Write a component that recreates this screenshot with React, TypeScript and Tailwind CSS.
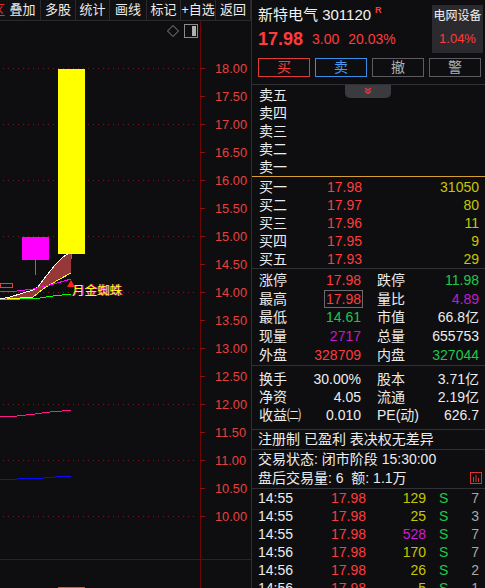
import React from 'react';

const toolbar = [
  { label: '叠加', cls: 'w-[36px]' },
  { label: '多股', cls: 'w-[35px]' },
  { label: '统计', cls: 'w-[34px]' },
  { label: '画线', cls: 'w-[37px]' },
  { label: '标记', cls: 'w-[34px]' },
  { label: '+自选', cls: 'w-[35px]' },
  { label: '返回', cls: 'flex-1' },
];

const asks = ['卖五', '卖四', '卖三', '卖二', '卖一'];

const bids = [
  ['买一', '17.98', '31050'],
  ['买二', '17.97', '80'],
  ['买三', '17.96', '11'],
  ['买四', '17.95', '9'],
  ['买五', '17.93', '29'],
];

const RED = 'text-[#ff3b3b]';
const GREEN = 'text-[#1ec84a]';
const PURPLE = 'text-[#c21cc8]';
const WHITE = 'text-[#ececec]';

const stats = [
  { a: '涨停', av: '17.98', ac: RED, b: '跌停', bv: '11.98', bc: GREEN },
  { a: '最高', av: '17.98', ac: RED, box: true, b: '量比', bv: '4.89', bc: PURPLE },
  { a: '最低', av: '14.61', ac: GREEN, b: '市值', bv: '66.8亿', bc: WHITE },
  { a: '现量', av: '2717', ac: PURPLE, b: '总量', bv: '655753', bc: WHITE },
  { a: '外盘', av: '328709', ac: RED, b: '内盘', bv: '327044', bc: GREEN },
];

const fundamentals = [
  ['换手', '30.00%', '股本', '3.71亿'],
  ['净资', '4.05', '流通', '2.19亿'],
  ['收益㈡', '0.010', 'PE(动)', '626.7'],
];

const ticks = [
  { t: '14:55', p: '17.98', v: '129', n: '7' },
  { t: '14:55', p: '17.98', v: '25', n: '3' },
  { t: '14:55', p: '17.98', v: '528', n: '7', big: true },
  { t: '14:56', p: '17.98', v: '170', n: '7' },
  { t: '14:56', p: '17.98', v: '26', n: '2' },
  { t: '14:56', p: '17.98', v: '5', n: '1' },
];

// price -> page y
const py = (p: number) => 68 + (18 - p) * 56;
const axis = Array.from({ length: 17 }, (_, i) => 18 - i * 0.5);

const Chart = () => (
  <svg width="251" height="567" className="absolute inset-0" shapeRendering="crispEdges">
    <g transform="translate(0,-21)">
      {/* grid */}
      {axis.filter((p) => Number.isInteger(p)).map((p) => (
        <line key={p} x1="3" x2="198" y1={py(p) + 0.5} y2={py(p) + 0.5} stroke="#7a1a1a" strokeDasharray="1 4" />
      ))}
      <line x1="200.5" x2="200.5" y1="20" y2="588" stroke="#6e0606" />
      <line x1="0" x2="251" y1="559.5" y2="559.5" stroke="#6e0606" />
      {axis.map((p) => (
        <g key={p}>
          <line x1="200" x2="205" y1={py(p) + 0.5} y2={py(p) + 0.5} stroke="#8a1010" />
          <text x="215" y={py(p) + 4.5} fontSize="12.8" fill="#e8403c" shapeRendering="auto">
            {p.toFixed(2)}
          </text>
        </g>
      ))}

      {/* corner icons */}
      <path d="M173 25.5 L178.5 31 L173 36.5 L167.5 31 Z" fill="none" stroke="#8a8a8a" shapeRendering="auto" />
      <rect x="184.5" y="24.5" width="13" height="13" fill="none" stroke="#8a8a8a" />
      <rect x="192" y="26" width="4" height="10" fill="#b0b0b0" />

      {/* MA band */}
      <polygon
        points="0,299 10,297 33,290 38,287 43,280 55,265 63,257 71,252 71,273 58,280 43,289 33,297 0,299.5"
        fill="#963838"
        shapeRendering="auto"
      />
      <polyline points="0,299 10,297 33,290 38,287 43,280 55,265 63,257 71,252" fill="none" stroke="#ffffff" />
      <polyline points="0,299.5 33,297 43,289 58,280 71,273" fill="none" stroke="#ffff00" />
      <polyline points="0,292 17,291 33,289 50,285 71,279" fill="none" stroke="#ff00ff" />
      <polyline points="0,300 40,298 53,296 71,294" fill="none" stroke="#00ff00" />
      <rect x="0.5" y="283.5" width="12" height="4" fill="none" stroke="#e04040" />

      {/* candles */}
      <line x1="35.5" x2="35.5" y1="260" y2="275" stroke="#e04848" />
      <rect x="22" y="237" width="27" height="23" fill="#ff00ff" />
      <line x1="71.5" x2="71.5" y1="254" y2="259" stroke="#e04848" />
      <rect x="58" y="69" width="27" height="185" fill="#ffff00" />

      {/* signal */}
      <path d="M67 287 L71 280 L75 287 Z" fill="#ff2020" shapeRendering="auto" />
      <text x="73" y="295" fontSize="12.5" fill="#ff00ff" shapeRendering="auto">月金蜘蛛</text>
      <text x="72" y="295" fontSize="12.5" fill="#ffff00" shapeRendering="auto">月金蜘蛛</text>

      {/* long MAs */}
      <polyline points="0,417 17,416 35,414 50,412 62,411 71,410" fill="none" stroke="#ff1a8c" />
      <polyline points="0,479 17,479 27,478 44,478 55,477 62,476.5 71,476.5" fill="none" stroke="#0a0aff" />

      <rect x="58" y="587" width="27" height="2" fill="#e05050" />
    </g>
  </svg>
);

export default function App() {
  return (
    <div className="flex h-[588px] w-[485px] overflow-hidden bg-[#0e0e11] font-['Liberation_Sans','Noto_Sans_CJK_SC',sans-serif] text-[#ececec]">
      {/* left: chart */}
      <div className="flex w-[251px] shrink-0 flex-col">
        <div className="flex h-[21px] shrink-0 border-b border-[#2a2a2e] bg-[#111114] text-[13px] leading-[20px]">
          <div className="flex w-[5px] justify-end overflow-hidden text-[#e03030]">
            <span className="shrink-0">区</span>
          </div>
          {toolbar.map((item) => (
            <div key={item.label} className={`${item.cls} border-r border-[#2a2a2e] text-center`}>
              {item.label}
            </div>
          ))}
        </div>
        <div className="relative flex-1">
          <Chart />
        </div>
      </div>

      {/* right: quote panel */}
      <div className="w-[234px] shrink-0 overflow-hidden border-l border-[#2e2e33] text-[14px]">
        {/* header */}
        <div className="h-[85px] border-b border-[#303035]">
          <div className="flex justify-between pt-[5px] pl-[6px] pr-[2px]">
            <div>
              <div className="flex h-[20px] items-center text-[15px] text-[#f2f2f2]">
                新特电气 301120
                <span className="ml-[4px] self-start pt-[1px] text-[9px] font-bold leading-none text-[#ff3b3b]">R</span>
              </div>
              <div className="mt-[4px] flex h-[20px] items-center text-[#ff3b3b]">
                <span className="text-[18px] font-bold">17.98</span>
                <span className="ml-[9px]">3.00</span>
                <span className="ml-[9px]">20.03%</span>
              </div>
            </div>
            <div className="flex h-[48px] w-[51px] flex-col items-center bg-[#2b2b2f] text-[12px]">
              <span className="mt-[4px] leading-[14px] text-[#f0f0f0]">电网设备</span>
              <span className="mt-[9px] text-[13px] leading-[14px] text-[#ff3b3b]">1.04%</span>
            </div>
          </div>
          <div className="mt-[5px] flex gap-[5px] pl-[6px]">
            <div className="flex h-[19px] w-[52px] items-center justify-center border border-[#e03a3a] text-[#ff3b3b]">买</div>
            <div className="flex h-[19px] w-[52px] items-center justify-center border border-[#3a8ee6] text-[#4a9cf0]">卖</div>
            <div className="flex h-[19px] w-[52px] items-center justify-center border border-[#5c5c60] text-[#b0b0b0]">撤</div>
            <div className="flex h-[19px] w-[52px] items-center justify-center border border-[#5c5c60] text-[#b0b0b0]">警</div>
          </div>
        </div>

        {/* order book */}
        <div className="relative">
          <div className="absolute left-[93px] top-0 flex h-[13px] w-[46px] items-start justify-center rounded-b-[5px] bg-[#3a3a3f]">
            <svg width="8" height="8" viewBox="0 0 8 8" className="mt-[2px]">
              <path d="M1 1 L4 3.5 L7 1 M1 4 L4 6.5 L7 4" fill="none" stroke="#ff3b3b" strokeWidth="1.2" />
            </svg>
          </div>
          <div className="border-b border-[#d8a030] pt-[1px]">
            {asks.map((a) => (
              <div key={a} className="flex h-[18px] items-center pl-[7px] leading-none">{a}</div>
            ))}
          </div>
          <div className="border-b border-[#303035] pt-[1px]">
            {bids.map(([l, p, q]) => (
              <div key={l} className="flex h-[18px] items-center pl-[7px] pr-[6px] leading-none">
                <span className="w-[65px]">{l}</span>
                <span className="w-[38px] text-right text-[#ff3b3b]">{p}</span>
                <span className="flex-1 text-right text-[#c6c600]">{q}</span>
              </div>
            ))}
          </div>
        </div>

        {/* stats */}
        <div className="border-b border-[#303035] pt-[2px] pb-[1px]">
          {stats.map((r) => (
            <div key={r.a} className="flex h-[18.6px] items-center gap-[16px] pl-[7px] pr-[6px] leading-none">
              <div className="flex w-[102px] items-center justify-between">
                <span>{r.a}</span>
                {r.box ? (
                  <span className={`-mr-[2px] flex h-[18px] items-center border border-[#6a6a6e] pl-[1px] pr-[1px] ${r.ac}`}>{r.av}</span>
                ) : (
                  <span className={r.ac}>{r.av}</span>
                )}
              </div>
              <div className="flex w-[102px] items-center justify-between">
                <span>{r.b}</span>
                <span className={r.bc}>{r.bv}</span>
              </div>
            </div>
          ))}
        </div>

        <div className="border-b border-[#303035] pt-[4px] pb-[5px]">
          {fundamentals.map(([a, av, b, bv]) => (
            <div key={a} className="flex h-[18px] items-center gap-[16px] pl-[7px] pr-[6px] leading-none">
              <div className="flex w-[102px] items-center justify-between">
                <span>{a}</span>
                <span>{av}</span>
              </div>
              <div className="flex w-[102px] items-center justify-between">
                <span>{b}</span>
                <span>{bv}</span>
              </div>
            </div>
          ))}
        </div>

        <div className="flex h-[20px] items-center border-b border-[#303035] pl-[6px] leading-none">
          注册制 已盈利 表决权无差异
        </div>

        <div className="border-b border-[#303035]">
          <div className="flex h-[19px] items-center pl-[6px] leading-none">交易状态: 闭市阶段 15:30:00</div>
          <div className="flex h-[19px] items-center justify-between pl-[6px] pr-[3px] leading-none">
            <span>盘后交易量: 6&nbsp;&nbsp;额: 1.1万</span>
            <svg width="12" height="12" viewBox="0 0 12 12">
              <rect x="0.5" y="0.5" width="11" height="11" fill="none" stroke="#e03030" />
              <rect x="3" y="5" width="1" height="5" fill="#e03030" />
              <rect x="5.5" y="3" width="1" height="7" fill="#e03030" />
              <rect x="8" y="6" width="1" height="4" fill="#e03030" />
            </svg>
          </div>
        </div>

        {/* ticks */}
        <div>
          {ticks.map((r, i) => (
            <div key={i} className="flex h-[18px] items-center pl-[6px] pr-[6px] leading-none">
              <span className="w-[73px]">{r.t}</span>
              <span className="w-[35px] text-[#ff3b3b]">{r.p}</span>
              <span className={`w-[60px] text-right ${r.big ? 'text-[#d21ad2]' : 'text-[#c6c600]'}`}>{r.v}</span>
              <span className="ml-[13px] w-[8px] text-[#1ec84a]">S</span>
              <span className="flex-1 text-right text-[#a8a8a8]">{r.n}</span>
            </div>
          ))}
        </div>
      </div>
    </div>
  );
}
